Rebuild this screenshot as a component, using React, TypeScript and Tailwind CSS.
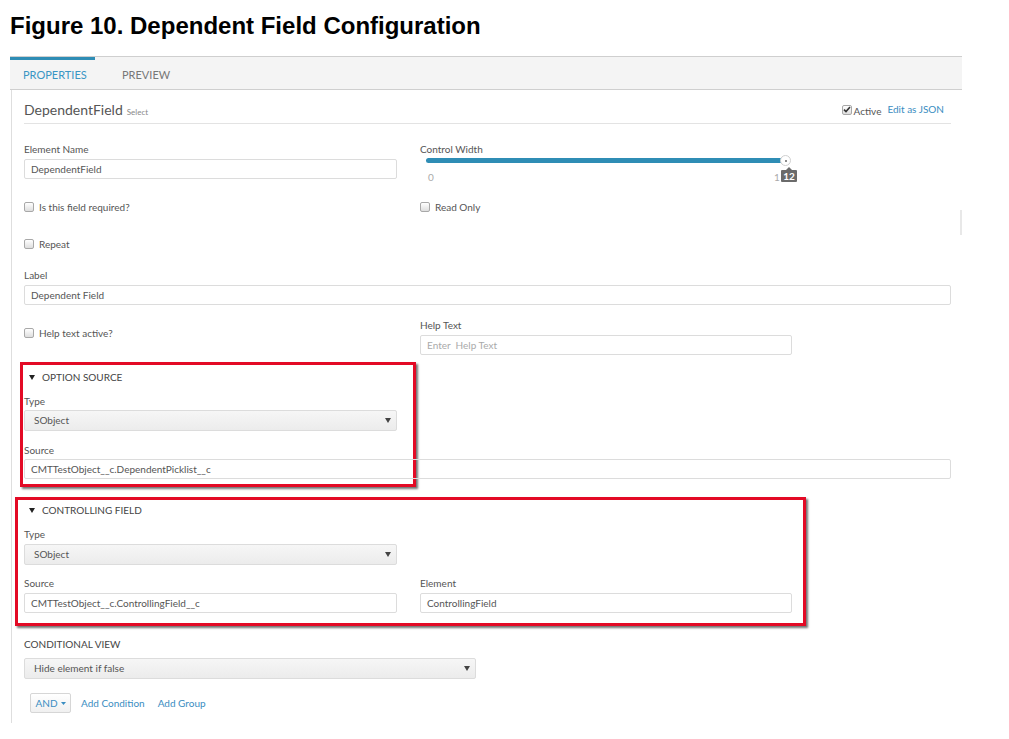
import React from "react";

function Label({ children }: { children: React.ReactNode }) {
  return <div className="text-[10px] leading-[14px] text-[#555]">{children}</div>;
}

function TextBox({ value, placeholder, className = "" }: { value?: string; placeholder?: string; className?: string }) {
  return (
    <div
      className={`h-[20px] border border-[#dcdcdc] rounded-[2px] flex items-center px-[6px] text-[10px] leading-none whitespace-pre ${
        value ? "text-[#555]" : "text-[#aaa]"
      } ${className}`}
    >
      {value ?? placeholder}
    </div>
  );
}

function SelectBox({ value, className = "" }: { value: string; className?: string }) {
  return (
    <div
      className={`h-[21px] border border-[#dcdcdc] rounded-[2px] bg-linear-to-b from-[#f6f6f6] to-[#ececec] flex items-center justify-between pl-[9px] pr-[5px] text-[10px] text-[#555] ${className}`}
    >
      <span>{value}</span>
      <svg width="6" height="5" viewBox="0 0 6 5">
        <path d="M0 0h6L3 5z" fill="#444" />
      </svg>
    </div>
  );
}

function Check({ checked = false }: { checked?: boolean }) {
  return (
    <span className="w-[10px] h-[10px] shrink-0 rounded-[2px] border border-[#a8a8a8] bg-linear-to-b from-white to-[#dedede] flex items-center justify-center">
      {checked && (
        <svg width="8" height="7" viewBox="0 0 8 7">
          <path d="M1 3.6l2 2L7 1" stroke="#333" strokeWidth="1.6" fill="none" />
        </svg>
      )}
    </span>
  );
}

function CheckRow({ text }: { text: string }) {
  return (
    <div className="flex items-center gap-[5px] h-[14px] text-[10px] text-[#555]">
      <Check />
      <span>{text}</span>
    </div>
  );
}

function SectionHead({ text }: { text: string }) {
  return (
    <div className="flex items-center h-[14px] pl-[5px] text-[10px] text-[#444] uppercase">
      <svg width="6" height="5" viewBox="0 0 6 5">
        <path d="M0 0h6L3 5z" fill="#222" />
      </svg>
      <span className="ml-[7px]">{text}</span>
    </div>
  );
}

export default function App() {
  return (
    <div className="w-[1009px] h-[739px] bg-white overflow-hidden">
      <h1 className="pl-[10px] pt-[12px] text-[24px] leading-[28px] font-bold text-black font-['Liberation_Sans',Arial,sans-serif]">
        Figure 10. Dependent Field Configuration
      </h1>

      <div className="mt-[16px] ml-[10px] w-[952px] font-[Lato,sans-serif]">
        {/* tabs */}
        <div className="h-[34px] flex border-y border-[#cfcfcf] bg-[#f4f4f4]">
          <div className="w-[85px] border-t-[3px] border-[#2f8db5] flex items-center pl-[13px] pt-[1px] text-[11px] text-[#3a96c4]">
            PROPERTIES
          </div>
          <div className="ml-[27px] pt-[4px] flex items-center text-[11px] text-[#777]">PREVIEW</div>
        </div>

        <div className="relative ml-[1px] border-l border-[#dedede] pl-[12px] pr-[11px] pb-[10px]">
          <div className="absolute left-[948px] top-[120px] w-[2px] h-[25px] bg-[#e8e8e8]" />

          {/* header */}
          <div className="h-[34px] pt-[6px] border-b border-[#e3e3e3] flex items-center justify-between pr-[7px]">
            <div className="flex items-baseline gap-[4px]">
              <span className="text-[14px] text-[#555]">DependentField</span>
              <span className="text-[8px] text-[#888]">Select</span>
            </div>
            <div className="flex items-center text-[10px]">
              <Check checked />
              <span className="ml-[2px] mt-[3px] text-[#555]">Active</span>
              <span className="ml-[6px] text-[#3a8dc1]">Edit as JSON</span>
            </div>
          </div>

          {/* element name / control width */}
          <div className="mt-[18px] grid grid-cols-[373px_372px] gap-x-[23px] h-[37px]">
            <div>
              <Label>Element Name</Label>
              <TextBox value="DependentField" className="mt-[3px]" />
            </div>
            <div>
              <Label>Control Width</Label>
              <div className="relative ml-[6px] mt-[2px] w-[360px] h-[5px] rounded-full bg-[#2f8db5]">
                <div className="absolute right-[-5px] top-[-3px] w-[11px] h-[11px] rounded-full bg-white border border-[#cfcfcf] flex items-center justify-center">
                  <span className="w-[2px] h-[2px] rounded-full bg-[#666]" />
                </div>
              </div>
              <div className="relative ml-[8px] mt-[7px] h-[14px] text-[10px] leading-[14px] text-[#aaa]">
                0
                <span className="absolute left-[346px] top-0">1</span>
                <div className="absolute left-[353px] top-0 w-[16px] h-[12px] bg-[#6b6b6b] rounded-[1px] text-white text-[10px] font-bold leading-[12px] text-center">
                  <span className="absolute left-[5px] top-[-3px] w-0 h-0 border-x-[3px] border-x-transparent border-b-[3px] border-b-[#6b6b6b]" />
                  12
                </div>
              </div>
            </div>
          </div>

          <div className="mt-[21px] grid grid-cols-[373px_372px] gap-x-[23px]">
            <CheckRow text="Is this field required?" />
            <CheckRow text="Read Only" />
          </div>

          <div className="mt-[23px]">
            <CheckRow text="Repeat" />
          </div>

          <div className="mt-[17px]">
            <Label>Label</Label>
            <TextBox value="Dependent Field" className="mt-[3px]" />
          </div>

          <div className="mt-[13px] grid grid-cols-[373px_372px] gap-x-[23px]">
            <div className="pt-[8px]">
              <CheckRow text="Help text active?" />
            </div>
            <div>
              <Label>Help Text</Label>
              <TextBox placeholder="Enter  Help Text" className="mt-[3px]" />
            </div>
          </div>

          {/* option source */}
          <div className="mt-[7px] -ml-[4px] w-[396px] border-[3px] border-[#e30a25] shadow-[2px_2px_2px_rgba(0,0,0,0.55)] pl-[1px] pt-[5px] pb-[5px]">
            <SectionHead text="Option Source" />
            <div className="mt-[10px]">
              <Label>Type</Label>
              <SelectBox value="SObject" className="mt-[2px] w-[373px]" />
            </div>
            <div className="mt-[12px]">
              <Label>Source</Label>
              <TextBox value="CMTTestObject__c.DependentPicklist__c" className="mt-[2px] w-[927px] bg-transparent" />
            </div>
          </div>

          {/* controlling field */}
          <div className="mt-[10px] -ml-[9px] w-[791px] border-[3px] border-[#e30a25] shadow-[2px_2px_2px_rgba(0,0,0,0.55)] pl-[6px] pt-[3px] pb-[10px]">
            <SectionHead text="Controlling Field" />
            <div className="mt-[10px]">
              <Label>Type</Label>
              <SelectBox value="SObject" className="mt-[3px] w-[373px] h-[20px]" />
            </div>
            <div className="mt-[11px] grid grid-cols-[373px_372px] gap-x-[23px]">
              <div>
                <Label>Source</Label>
                <TextBox value="CMTTestObject__c.ControllingField__c" className="mt-[3px]" />
              </div>
              <div>
                <Label>Element</Label>
                <TextBox value="ControllingField" className="mt-[3px]" />
              </div>
            </div>
          </div>

          {/* conditional view */}
          <div className="mt-[11px]">
            <div className="text-[10px] leading-[14px] text-[#444]">CONDITIONAL VIEW</div>
            <SelectBox value="Hide element if false" className="mt-[7px] w-[452px] h-[20px]" />
          </div>

          <div className="mt-[14px] ml-[6px] flex items-center text-[10px] text-[#3a8dc1]">
            <div className="w-[41px] h-[20px] border border-[#d6d6d6] rounded-[2px] bg-linear-to-b from-white to-[#f0f0f0] flex items-center justify-center gap-[3px]">
              <span>AND</span>
              <svg width="5" height="3" viewBox="0 0 5 3">
                <path d="M0 0h5L2.5 3z" fill="#3a8dc1" />
              </svg>
            </div>
            <span className="ml-[10px]">Add Condition</span>
            <span className="ml-[13px]">Add Group</span>
          </div>
        </div>
      </div>
    </div>
  );
}
